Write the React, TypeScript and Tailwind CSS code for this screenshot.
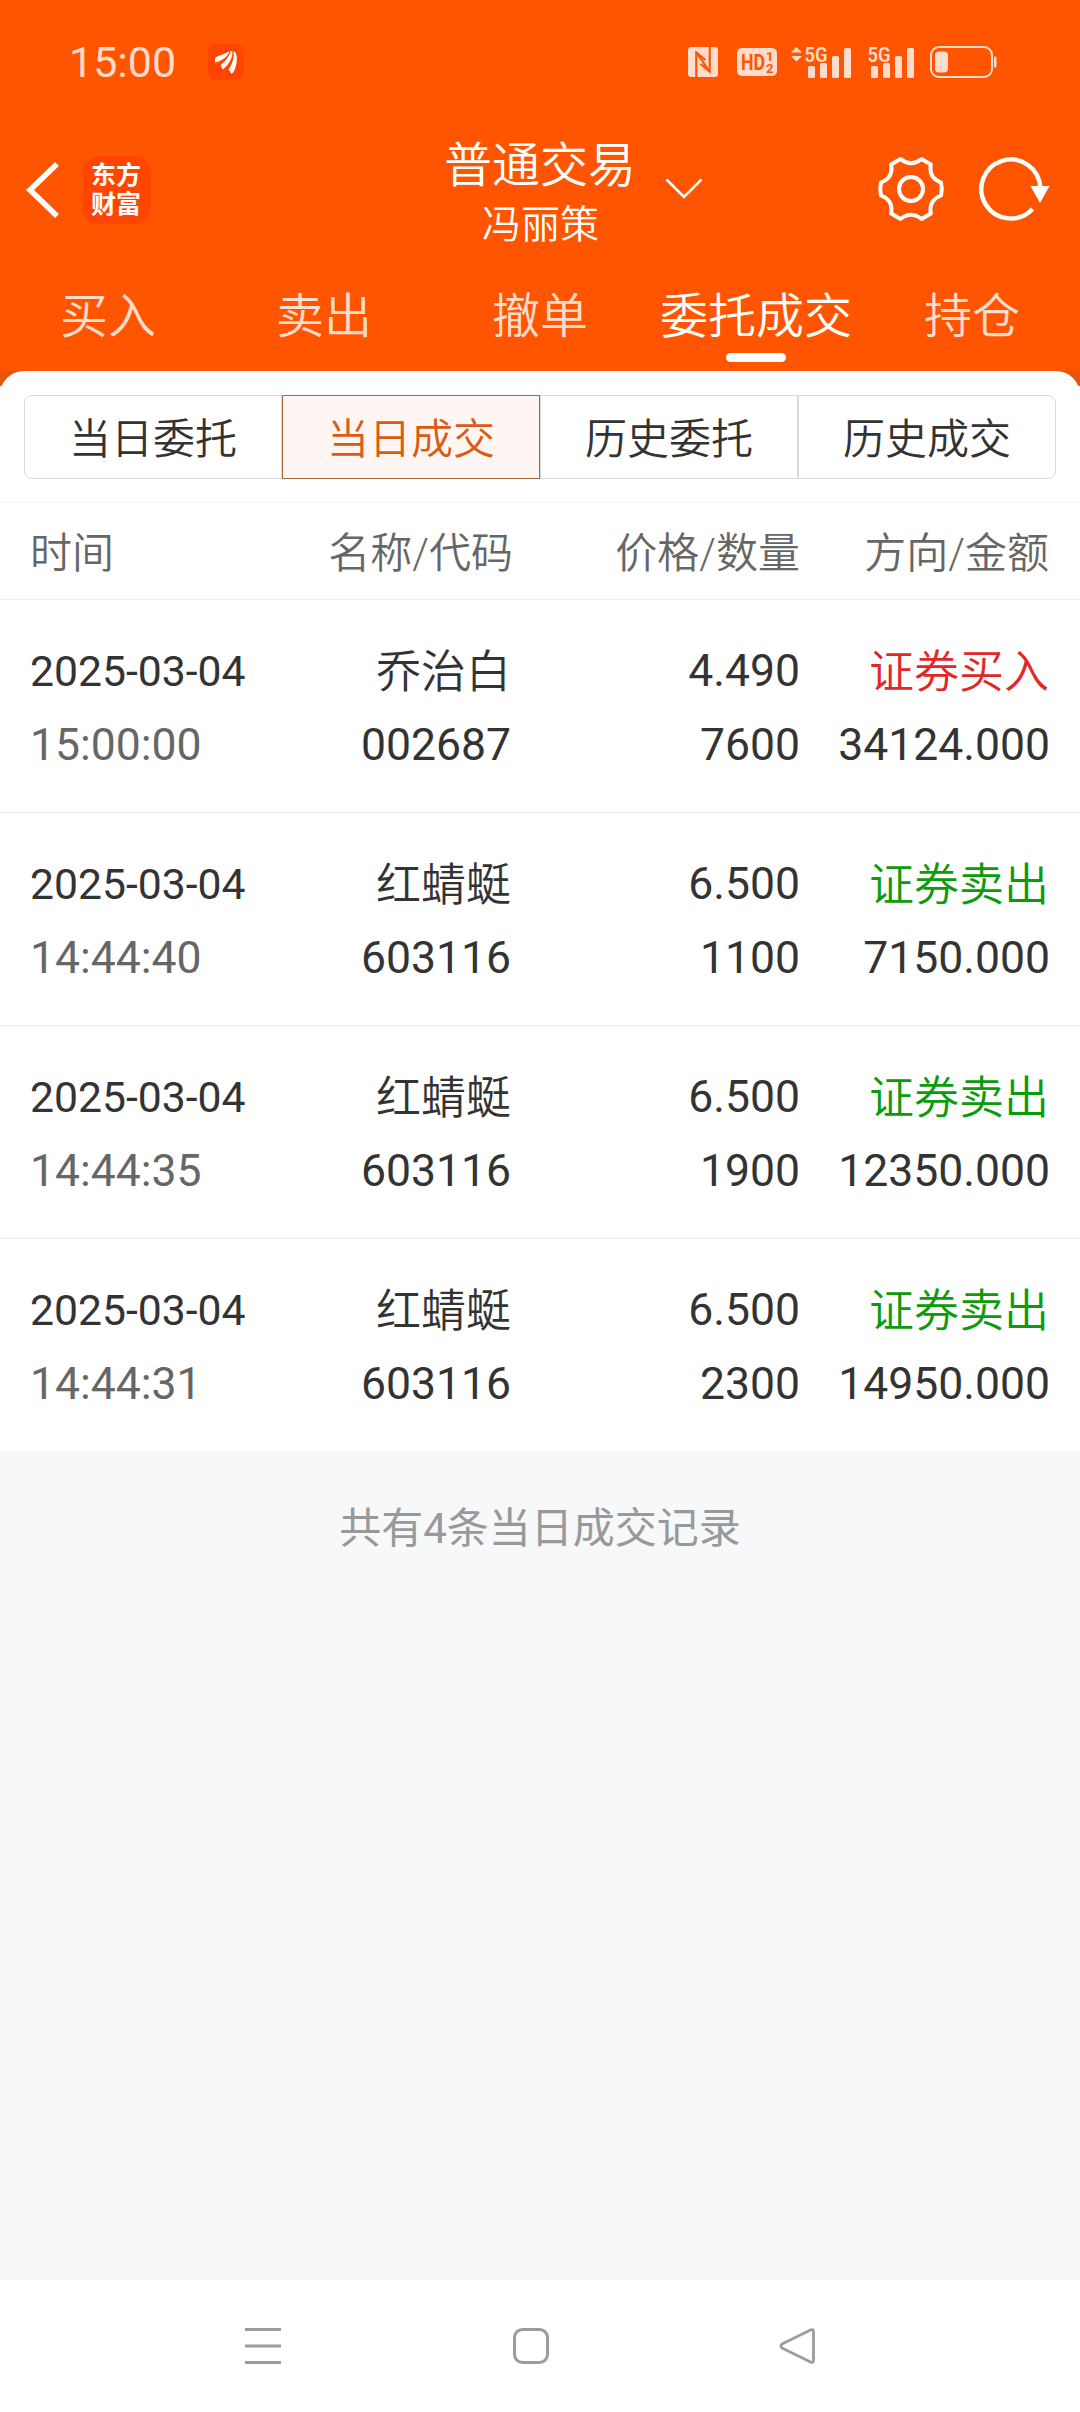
import clsx from 'clsx';

type Trade = {
	date: string;
	time: string;
	name: string;
	code: string;
	price: string;
	amount: string;
	side: 'buy' | 'sell';
	total: string;
};

const trades: Trade[] = [
	{
		date: '2025-03-04',
		time: '15:00:00',
		name: '乔治白',
		code: '002687',
		price: '4.490',
		amount: '7600',
		side: 'buy',
		total: '34124.000',
	},
	{
		date: '2025-03-04',
		time: '14:44:40',
		name: '红蜻蜓',
		code: '603116',
		price: '6.500',
		amount: '1100',
		side: 'sell',
		total: '7150.000',
	},
	{
		date: '2025-03-04',
		time: '14:44:35',
		name: '红蜻蜓',
		code: '603116',
		price: '6.500',
		amount: '1900',
		side: 'sell',
		total: '12350.000',
	},
	{
		date: '2025-03-04',
		time: '14:44:31',
		name: '红蜻蜓',
		code: '603116',
		price: '6.500',
		amount: '2300',
		side: 'sell',
		total: '14950.000',
	},
];

const mainTabs = ['买入', '卖出', '撤单', '委托成交', '持仓'];
const subTabs = ['当日委托', '当日成交', '历史委托', '历史成交'];

function Signal({ arrows }: { arrows?: boolean }) {
	return (
		<svg width="62" height="46" viewBox="0 -6 62 46" fill="#ffdccb">
			{arrows && <path d="M1 7.5 6.5 2 12 7.5zM1 11h11l-5.5 5.5z" />}
			<text
				x="14.5"
				y="16.5"
				fontSize="21"
				fontWeight="600"
				textLength="23"
				lengthAdjust="spacingAndGlyphs"
			>
				5G
			</text>
			<rect x="18" y="21" width="7" height="12" rx="1.5" />
			<rect x="30" y="18" width="7" height="15" rx="1.5" />
			<rect x="42" y="11" width="7" height="22" rx="1.5" />
			<rect x="54" y="3" width="7" height="30" rx="1.5" />
		</svg>
	);
}

function StatusBar() {
	return (
		<div className="flex h-[124px] items-center pl-[69px]">
			<span className="w-[139px] pt-px text-[43px] leading-none font-normal text-[#ffdccb]">
				15:00
			</span>
			<svg width="36" height="36" viewBox="0 0 36 36">
				<rect width="36" height="36" rx="8" fill="#ff4500" />
				<g fill="#fff">
					<path d="M7 18.500V14.500C9 11 15 11.500 21.500 7C20 12 15.500 16.500 7 18.500z" />
					<path d="M13 20.500C18 17 21.500 12 22.500 7L24.300 7C25 13 21.500 20 15 25.500C13.500 24 13 22.500 13 20.500z" />
					<path d="M25.600 7C28.500 8.500 29.500 13 28.500 19C27.800 24 26 28 23.500 30L20.500 25.500C24.500 20 26.300 14 25.600 7z" />
				</g>
			</svg>
			<div className="ml-[444px] flex items-center">
				<svg width="30" height="30" viewBox="0 0 30 30">
					<rect width="30" height="30" rx="3" fill="#ffdccb" />
					<path
						d="M8.300 30V5.500L17.500 13M21.700 0V24.500L12.500 17"
						fill="none"
						stroke="#ff5500"
						strokeWidth="2.200"
					/>
					<path d="M8.500 5.500 21.500 24.500" stroke="#ff5500" strokeWidth="2.200" />
				</svg>
				<svg
					className="ml-[19px]"
					width="40"
					height="28"
					viewBox="0 0 40 28"
					fill="#ff5500"
					fontWeight="700"
				>
					<rect width="40" height="28" rx="5" fill="#ffdccb" />
					<text
						x="4"
						y="22"
						fontSize="22"
						textLength="24"
						lengthAdjust="spacingAndGlyphs"
					>
						HD
					</text>
					<text x="29" y="13" fontSize="13">
						1
					</text>
					<text x="29" y="25" fontSize="13">
						2
					</text>
				</svg>
				<div className="ml-[13px] flex">
					<Signal arrows />
					<div className="ml-px">
						<Signal />
					</div>
				</div>
				<svg
					className="ml-[14px]"
					width="70"
					height="32"
					viewBox="0 0 70 32"
				>
					<rect
						x="2"
						y="1"
						width="61"
						height="30"
						rx="8"
						fill="none"
						stroke="#ffdccb"
						strokeWidth="2"
					/>
					<rect x="6" y="5.500" width="13" height="21" rx="4" fill="#ffdccb" />
					<rect x="65" y="10.500" width="2.500" height="11" rx="1" fill="#ffdccb" />
				</svg>
			</div>
		</div>
	);
}

function TitleBar() {
	return (
		<div className="grid h-[140px] grid-cols-[1fr_auto_1fr] items-center">
			<div className="flex items-center pb-[9px] pl-[25px]">
				<svg width="36" height="58" viewBox="0 0 36 58">
					<path
						d="M32 3 5 29 32 55"
						fill="none"
						stroke="#fff"
						strokeWidth="5.500"
					/>
				</svg>
				<div className="ml-[22px] flex h-[68px] w-[68px] flex-col items-center justify-center rounded-2xl bg-[#ff4500] pr-[2px] text-[25px] leading-[29px] font-bold text-white">
					<span>东方</span>
					<span>财富</span>
				</div>
			</div>
			<div className="flex flex-col items-center pb-[2px] text-white">
				<span className="text-[48px] leading-[64px]">普通交易</span>
				<span className="pl-px text-[39px] leading-[54px]">冯丽策</span>
			</div>
			<div className="flex items-center pb-[10px] pl-[29px]">
				<svg
					className="shrink-0"
					width="38"
					height="24"
					viewBox="0 0 38 24"
				>
					<path
						d="M1.500 2.500 19 20 36.500 2.500"
						fill="none"
						stroke="#fff"
						strokeWidth="2.500"
					/>
				</svg>
				<svg
					className="ml-[173px] shrink-0"
					width="70"
					height="70"
					viewBox="-35 -35 70 70"
					fill="none"
					stroke="#fff"
					strokeWidth="4"
				>
					<circle r="12" />
					<path
						strokeLinejoin="round"
						d="M-10.500-30Q0-21.500 10.500-30L19.800-24.600Q17.500-11.200 30-6.500Q31.600 0 30 6.500Q17.500 11.200 19.800 24.600L10.500 30Q0 21.500-10.500 30L-19.800 24.600Q-17.500 11.200-30 6.500Q-31.600 0-30-6.500Q-17.500-11.200-19.800-24.600Z"
					/>
				</svg>
				<svg
					className="ml-[32px] shrink-0"
					width="74"
					height="70"
					viewBox="-33 -35 74 70"
				>
					<path
						d="M29.300-1A29.500 29.500 0 1 0 21.500 20"
						fill="none"
						stroke="#fff"
						strokeWidth="4.500"
					/>
					<path d="M19.500-3h19l-9.500 17z" fill="#fff" />
				</svg>
			</div>
		</div>
	);
}

function MainTabs() {
	return (
		<div className="grid h-[107px] grid-cols-5 text-[48px]">
			{mainTabs.map((tab) => {
				const active = tab === '委托成交';
				return (
					<div
						key={tab}
						className={clsx(
							'flex flex-col items-center whitespace-nowrap',
							active ? 'text-white' : 'text-[#ffdccb]'
						)}
					>
						<span className="mt-[18px] leading-[70px]">{tab}</span>
						{active && (
							<span className="mt-px h-[9px] w-[60px] rounded-full bg-white" />
						)}
					</div>
				);
			})}
		</div>
	);
}

function SubTabs() {
	return (
		<div className="rounded-t-3xl bg-white px-6 pt-6 pb-[23px]">
			<div className="grid h-[84px] grid-cols-4 text-[42px] text-[#333]">
				{subTabs.map((tab) => (
					<div
						key={tab}
						className={clsx(
							'flex items-center justify-center border pt-[5px] first:rounded-l-lg last:rounded-r-lg',
							tab === '当日成交'
								? 'border-[#a9683a] bg-[#fff6f3] text-[#d95b14]'
								: 'border-[#d8dadb]'
						)}
					>
						{tab}
					</div>
				))}
			</div>
		</div>
	);
}

function TradeRow({ trade }: { trade: Trade }) {
	const cell = 'flex flex-col items-end';
	// digits sit a touch higher than the CJK glyphs next to them
	const num = 'font-normal -mt-[2px] mb-[2px]';
	return (
		<div className="grid h-[213px] grid-cols-[240px_241px_289px_250px] border-b border-[#ebebeb] px-[30px] pt-[36px] text-[44.5px] leading-[74px] text-[#333] last:h-[212px] last:border-b-0">
			<div className="flex flex-col">
				<span className={clsx(num, 'text-[42.7px]')}>{trade.date}</span>
				<span className={clsx(num, 'text-[#666]')}>{trade.time}</span>
			</div>
			<div className={cell}>
				<span className="text-[45px]">{trade.name}</span>
				<span className={num}>{trade.code}</span>
			</div>
			<div className={cell}>
				<span className={num}>{trade.price}</span>
				<span className={num}>{trade.amount}</span>
			</div>
			<div className={cell}>
				<span
					className={clsx(
						'pr-px text-[45px]',
						trade.side === 'buy' ? 'text-[#e02828]' : 'text-[#0b9b0b]'
					)}
				>
					{trade.side === 'buy' ? '证券买入' : '证券卖出'}
				</span>
				<span className={num}>{trade.total}</span>
			</div>
		</div>
	);
}

function NavBar() {
	return (
		<div className="flex h-[132px] items-center justify-between bg-white pr-[263px] pl-[243px]">
			<svg width="40" height="40" viewBox="0 0 40 40">
				<path
					d="M2 3.500h36M2 20h36M2 36.500h36"
					stroke="#9c9c9c"
					strokeWidth="3"
				/>
			</svg>
			<svg className="ml-[2px]" width="40" height="40" viewBox="0 0 40 40">
				<rect
					x="3.500"
					y="3.500"
					width="33"
					height="33"
					rx="8"
					fill="none"
					stroke="#9c9c9c"
					strokeWidth="3"
				/>
			</svg>
			<svg width="40" height="40" viewBox="0 0 40 40">
				<path
					d="M33.500 4Q36.500 2.500 36.500 6V34Q36.500 37.500 33.500 36L5 22Q3 20 5 18Z"
					fill="none"
					stroke="#9c9c9c"
					strokeWidth="2.800"
					strokeLinejoin="round"
				/>
			</svg>
		</div>
	);
}

export default function App() {
	return (
		<div className="flex h-[2412px] w-[1080px] flex-col bg-[#f6f8fa] font-['Roboto','Noto_Sans_CJK_SC',sans-serif] font-[350]">
			<header className="bg-[#ff5500]">
				<StatusBar />
				<TitleBar />
				<MainTabs />
			</header>
			<div className="bg-linear-to-b from-[#e8540c] from-[15px] to-white to-[15px]">
				<SubTabs />
			</div>
			<div className="grid h-[98px] grid-cols-[240px_243px_287px_249px] items-center border-y border-t-[#f5f5f5] border-b-[#ebebeb] bg-white px-[30px] pt-[4px] text-right text-[42px] text-[#666]">
				<span className="text-left">时间</span>
				<span>名称/代码</span>
				<span>价格/数量</span>
				<span>方向/金额</span>
			</div>
			<div className="bg-white">
				{trades.map((trade) => (
					<TradeRow key={trade.time} trade={trade} />
				))}
			</div>
			<p className="mt-[46px] grow text-center text-[42px] leading-[64px] font-normal text-[#999]">
				共有{trades.length}条当日成交记录
			</p>
			<NavBar />
		</div>
	);
}
